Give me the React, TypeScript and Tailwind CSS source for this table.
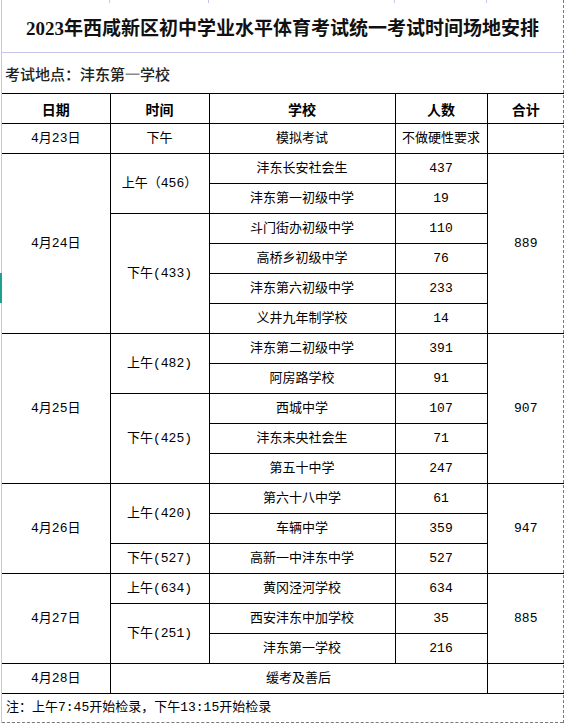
import React from 'react';

type SchoolRow = { school: string; count: string };
type Slot = { label: string; rows: SchoolRow[] };
type Day = { date: string; total: string; slots: Slot[] };

const days: Day[] = [
  {
    date: '4月24日',
    total: '889',
    slots: [
      { label: '上午（456）', rows: [{ school: '沣东长安社会生', count: '437' }, { school: '沣东第一初级中学', count: '19' }] },
      {
        label: '下午(433)',
        rows: [
          { school: '斗门街办初级中学', count: '110' },
          { school: '高桥乡初级中学', count: '76' },
          { school: '沣东第六初级中学', count: '233' },
          { school: '义井九年制学校', count: '14' },
        ],
      },
    ],
  },
  {
    date: '4月25日',
    total: '907',
    slots: [
      { label: '上午(482)', rows: [{ school: '沣东第二初级中学', count: '391' }, { school: '阿房路学校', count: '91' }] },
      {
        label: '下午(425)',
        rows: [
          { school: '西城中学', count: '107' },
          { school: '沣东未央社会生', count: '71' },
          { school: '第五十中学', count: '247' },
        ],
      },
    ],
  },
  {
    date: '4月26日',
    total: '947',
    slots: [
      { label: '上午(420)', rows: [{ school: '第六十八中学', count: '61' }, { school: '车辆中学', count: '359' }] },
      { label: '下午(527)', rows: [{ school: '高新一中沣东中学', count: '527' }] },
    ],
  },
  {
    date: '4月27日',
    total: '885',
    slots: [
      { label: '上午(634)', rows: [{ school: '黄冈泾河学校', count: '634' }] },
      { label: '下午(251)', rows: [{ school: '西安沣东中加学校', count: '35' }, { school: '沣东第一学校', count: '216' }] },
    ],
  },
];

const cell = 'border border-black text-center align-middle p-0';
const first = 'border-l-0';
const last = 'border-r-0';

export default function App() {
  return (
    <div
      className="relative w-[567px] h-[726px] bg-white text-black"
      style={{ fontFamily: '"Liberation Mono", "Noto Sans CJK SC", monospace' }}
    >
      {/* teal marker on the left edge */}
      <div className="absolute left-0 top-[273px] w-[2px] h-[30px] bg-[#1fa08c]" />

      <div className="ml-[1px] w-[563px] border-l border-r border-l-[#c6c6ec] border-r-[#7a7a7a] border-r-dashed" style={{ borderRightStyle: 'dashed' }}>
        {/* title */}
        <div className="h-[53px] border-b border-[#c6c6ec] flex flex-col">
          <div className="grid grid-cols-[108px_99px_186px_92px_76px] h-[3px]">
            <div className="border-r border-[#c6c6ec]" />
            <div className="border-r border-[#c6c6ec]" />
            <div className="border-r border-[#c6c6ec]" />
            <div className="border-r border-[#c6c6ec]" />
            <div />
          </div>
          <div
            className="flex-1 flex items-center justify-center pt-[3px] text-[19px] font-bold text-[#111]"
            style={{ fontFamily: '"Liberation Serif", "Noto Sans CJK SC", serif' }}
          >
            2023年西咸新区初中学业水平体育考试统一考试时间场地安排
          </div>
        </div>

        {/* location */}
        <div
          className="h-[40px] flex items-end pb-[7px] pl-[3px] text-[15px] font-medium text-[#222]"
          style={{ fontFamily: '"Liberation Serif", "Noto Sans CJK SC", serif' }}
        >
          考试地点：沣东第<span className="text-[#8a8a8a]">一</span>学校
        </div>

        {/* schedule table */}
        <table className="w-[562px] table-fixed border-collapse text-[13px] leading-none">
          <colgroup>
            <col className="w-[108px]" />
            <col className="w-[99px]" />
            <col className="w-[186px]" />
            <col className="w-[92px]" />
            <col className="w-[77px]" />
          </colgroup>
          <tbody>
            <tr className="h-[30px] font-bold text-[14px]" style={{ fontFamily: '"Noto Sans CJK SC", sans-serif' }}>
              <td className={`${cell} ${first}`}>日期</td>
              <td className={cell}>时间</td>
              <td className={cell}>学校</td>
              <td className={cell}>人数</td>
              <td className={`${cell} ${last}`}>合计</td>
            </tr>
            <tr className="h-[30px]">
              <td className={`${cell} ${first}`}>4月23日</td>
              <td className={cell}>下午</td>
              <td className={cell}>模拟考试</td>
              <td className={cell}>不做硬性要求</td>
              <td className={`${cell} ${last}`} />
            </tr>
            {days.map((day) => {
              const dayRows = day.slots.reduce((n, s) => n + s.rows.length, 0);
              return day.slots.map((slot, si) =>
                slot.rows.map((row, ri) => (
                  <tr key={`${day.date}-${si}-${ri}`} className="h-[30px]">
                    {si === 0 && ri === 0 && (
                      <td rowSpan={dayRows} className={`${cell} ${first}`}>
                        {day.date}
                      </td>
                    )}
                    {ri === 0 && (
                      <td rowSpan={slot.rows.length} className={cell}>
                        {slot.label}
                      </td>
                    )}
                    <td className={cell}>{row.school}</td>
                    <td className={cell}>{row.count}</td>
                    {si === 0 && ri === 0 && (
                      <td rowSpan={dayRows} className={`${cell} ${last}`}>
                        {day.total}
                      </td>
                    )}
                  </tr>
                ))
              );
            })}
            <tr className="h-[30px]">
              <td className={`${cell} ${first}`}>4月28日</td>
              <td colSpan={3} className={cell}>
                缓考及善后
              </td>
              <td className={`${cell} ${last}`} />
            </tr>
          </tbody>
        </table>

        {/* note */}
        <div
          className="h-[29px] flex items-center pl-[4px] text-[13px] border-b border-dashed border-[#7a7a7a]"
        >
          注：上午7:45开始检录，下午13:15开始检录
        </div>
      </div>
    </div>
  );
}
